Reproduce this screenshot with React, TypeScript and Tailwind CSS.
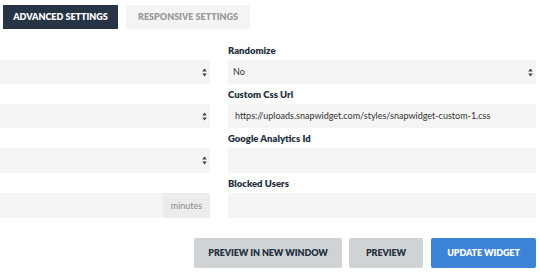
import React from "react";

const font = { fontFamily: "Lato, 'Open Sans', sans-serif" };

function Arrows() {
  return (
    <svg width="5" height="9" viewBox="0 0 5 9" className="shrink-0">
      <path d="M2.5 0.5 L4.8 3.6 H0.2 Z" fill="#444" />
      <path d="M2.5 8.5 L4.8 5.4 H0.2 Z" fill="#444" />
    </svg>
  );
}

function SelectBox({ value = "" }: { value?: string }) {
  return (
    <div className="h-[24px] bg-[#f5f5f5] flex items-center justify-between pl-[5px] pr-[3px] text-[9px] text-[#333]">
      <span>{value}</span>
      <Arrows />
    </div>
  );
}

function Label({ text }: { text?: string }) {
  return (
    <div className="h-[20px] flex items-center pt-[2px] text-[9.5px] font-extrabold text-[#26313f]">
      {text}
    </div>
  );
}

const btn = "h-[30px] rounded-[2px] text-[9px] font-extrabold tracking-[-0.1px]";

export default function App() {
  return (
    <div className="w-[540px] h-[272px] bg-white overflow-hidden" style={font}>
      {/* tabs */}
      <div className="flex gap-[8px] pl-[3px] pt-[5px]">
        <div className="w-[115px] h-[24px] bg-[#263445] text-white text-[9px] font-extrabold flex items-center justify-center">
          ADVANCED SETTINGS
        </div>
        <div className="w-[124px] h-[24px] bg-[#f4f4f4] text-[#9b9b9b] text-[9px] font-extrabold flex items-center justify-center">
          RESPONSIVE SETTINGS
        </div>
      </div>

      {/* form columns */}
      <div className="flex gap-[18px] pr-[4px] pt-[11px]">
        <div className="w-[210px] flex flex-col">
          <Label />
          <SelectBox />
          <Label />
          <SelectBox />
          <Label />
          <div className="h-[25px] bg-[#f5f5f5] flex items-center justify-end pr-[3px]">
            <Arrows />
          </div>
          <Label />
          <div className="h-[25px] flex">
            <div className="flex-1 bg-[#f5f5f5]" />
            <div className="w-[47px] bg-[#ececec] flex items-center justify-center text-[9px] text-[#8a8a8a]">
              minutes
            </div>
          </div>
        </div>

        <div className="flex-1 flex flex-col">
          <Label text="Randomize" />
          <SelectBox value="No" />
          <Label text="Custom Css Url" />
          <div className="h-[24px] bg-[#f5f5f5] flex items-center pl-[7px] text-[9px] text-[#333]">
            https://uploads.snapwidget.com/styles/snapwidget-custom-1.css
          </div>
          <Label text="Google Analytics Id" />
          <div className="h-[25px] bg-[#f5f5f5]" />
          <Label text="Blocked Users" />
          <div className="h-[25px] bg-[#f5f5f5]" />
        </div>
      </div>

      {/* buttons */}
      <div className="flex justify-end gap-[7px] pr-[4px] pt-[20px]">
        <button className={`${btn} w-[148px] bg-[#cfd3d5] text-[#26313f]`}>
          PREVIEW IN NEW WINDOW
        </button>
        <button className={`${btn} w-[74px] bg-[#cfd3d5] text-[#26313f]`}>
          PREVIEW
        </button>
        <button className={`${btn} w-[105px] ml-[1px] bg-[#3d84d8] text-white`}>
          UPDATE WIDGET
        </button>
      </div>
    </div>
  );
}
